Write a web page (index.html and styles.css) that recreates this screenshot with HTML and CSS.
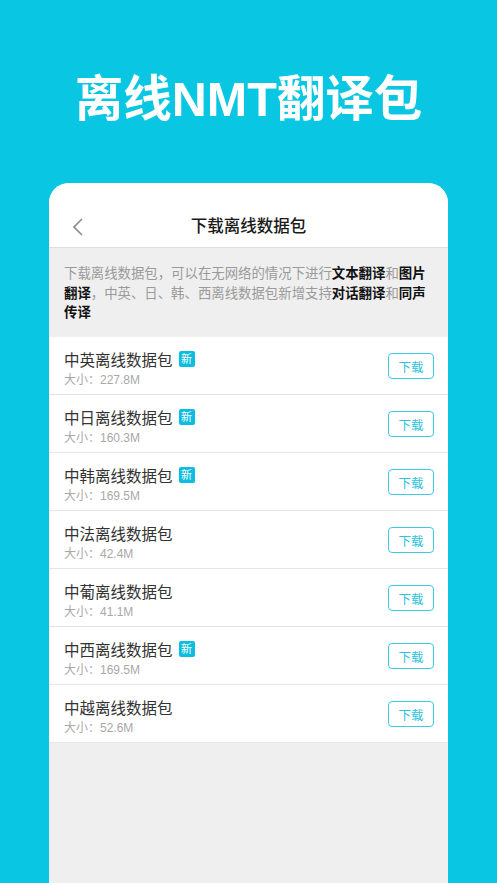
FILE: index.html
```html
<!DOCTYPE html>
<html lang="zh-CN">
<head>
<meta charset="utf-8">
<title>离线NMT翻译包</title>
<link rel="stylesheet" href="styles.css">
</head>
<body>
<header class="hero">
  <h1 class="hero-title">离线NMT翻译包</h1>
</header>
<main class="card">
  <div class="nav">
    <svg class="back" width="12" height="20" viewBox="0 0 12 20"><polyline points="9,2 1,10 9,18" fill="none" stroke="#8a8a8a" stroke-width="1.6"/></svg>
    <div class="nav-title">下载离线数据包</div>
  </div>
  <p class="desc">下载离线数据包，可以在无网络的情况下进行<b>文本翻译</b>和<b>图片</b><b>翻译</b>，中英、日、韩、西离线数据包新增支持<b>对话翻译</b>和<b>同声</b><b>传译</b></p>
  <ul class="list">
    <li class="item"><div class="info"><div class="name">中英离线数据包<span class="badge">新</span></div><div class="size">大小：227.8M</div></div><button class="dl">下载</button></li>
    <li class="item"><div class="info"><div class="name">中日离线数据包<span class="badge">新</span></div><div class="size">大小：160.3M</div></div><button class="dl">下载</button></li>
    <li class="item"><div class="info"><div class="name">中韩离线数据包<span class="badge">新</span></div><div class="size">大小：169.5M</div></div><button class="dl">下载</button></li>
    <li class="item"><div class="info"><div class="name">中法离线数据包</div><div class="size">大小：42.4M</div></div><button class="dl">下载</button></li>
    <li class="item"><div class="info"><div class="name">中葡离线数据包</div><div class="size">大小：41.1M</div></div><button class="dl">下载</button></li>
    <li class="item"><div class="info"><div class="name">中西离线数据包<span class="badge">新</span></div><div class="size">大小：169.5M</div></div><button class="dl">下载</button></li>
    <li class="item"><div class="info"><div class="name">中越离线数据包</div><div class="size">大小：52.6M</div></div><button class="dl">下载</button></li>
  </ul>
</main>
</body>
</html>
```
FILE: styles.css
```css
* { box-sizing: border-box; }
html, body { margin: 0; padding: 0; }
body {
  background: #09c7e2;
  font-family: "Liberation Sans", "Noto Sans CJK SC", sans-serif;
  height: 883px;
  overflow: hidden;
}
.hero {
  height: 183px;
  padding-top: 66px;
}
.hero-title {
  margin: 0;
  text-align: center;
  color: #fff;
  font-size: 48.5px;
  font-weight: 700;
  line-height: 66px;
}
.card {
  margin: 0 49px 0 49px;
  height: 700px;
  background: #efefef;
  border-radius: 20px 20px 0 0;
  overflow: hidden;
}
.nav {
  height: 65px;
  background: #fff;
  border-bottom: 1px solid #dedede;
  display: flex;
  align-items: center;
  justify-content: center;
  position: relative;
}
.back {
  position: absolute;
  left: 24px;
  top: 34px;
}
.nav-title {
  font-size: 16.5px;
  font-weight: 500;
  color: #1a1a1a;
  margin-top: 20px;
}
.desc {
  margin: 0;
  padding: 16px 14px 14px 15px;
  font-size: 13.4px;
  line-height: 19.6px;
  color: #9a9a9a;
}
.desc b {
  color: #111;
  font-weight: 700;
}
.list {
  list-style: none;
  margin: 0;
  padding: 0;
  background: #fff;
}
.item {
  height: 58px;
  border-bottom: 1px solid #e6e6e6;
  display: flex;
  align-items: center;
  justify-content: space-between;
  padding: 0 14px 0 15px;
}
.info {
  align-self: flex-start;
  display: flex;
  flex-direction: column;
  padding-top: 13.5px;
}
.name {
  font-size: 15.5px;
  line-height: 21px;
  color: #333;
  display: flex;
  align-items: center;
}
.badge {
  display: inline-flex;
  align-items: center;
  justify-content: center;
  width: 16px;
  height: 16px;
  margin-left: 6px;
  background: #0bbde0;
  color: #fff;
  font-size: 11px;
  line-height: 16px;
  border-radius: 2px;
  margin-top: -3px;
}
.size {
  font-size: 12px;
  line-height: 18px;
  color: #a8a8a8;
}
.dl {
  width: 46px;
  height: 26px;
  border: 1.5px solid #3ccbe3;
  border-radius: 4px;
  background: #fff;
  color: #2cc3dc;
  font-family: inherit;
  font-size: 12.5px;
  padding: 0;
  margin-top: 2px;
}
```
